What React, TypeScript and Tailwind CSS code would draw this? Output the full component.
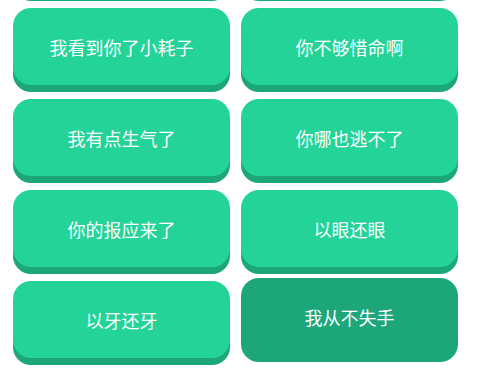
/**
 * SoundBoard
 * Grid of big green phrase buttons (scrolled list view)
 */

// =============================================================================
// Data
// =============================================================================

const PHRASES = [
  "准备好了吗",
  "我来了",
  "我看到你了小耗子",
  "你不够惜命啊",
  "我有点生气了",
  "你哪也逃不了",
  "你的报应来了",
  "以眼还眼",
  "以牙还牙",
  "我从不失手",
  "游戏结束",
  "再见了",
];

// index of the button currently under the pointer
const ACTIVE = 9;

// =============================================================================
// Component
// =============================================================================

export default function App() {
  return (
    <div
      className="w-[480px] h-[372px] overflow-hidden bg-white"
      style={{ fontFamily: '"Noto Sans CJK SC", "Noto Sans", sans-serif' }}
    >
      {/* List, scrolled down by one row */}
      <div className="-mt-[83px] pl-[13px] pr-[22px] grid grid-cols-2 gap-x-[11px] gap-y-[14px]">
        {PHRASES.map((text, index) => (
          <PhraseButton key={index} text={text} active={index === ACTIVE} />
        ))}
      </div>
    </div>
  );
}

// =============================================================================
// Phrase Button
// =============================================================================

interface PhraseButtonProps {
  text: string;
  active?: boolean;
}

function PhraseButton({ text, active = false }: PhraseButtonProps) {
  return (
    <button
      className={`
        h-[77px] rounded-[18px] flex items-center justify-center
        text-white text-[18px] leading-none
        shadow-[0_7px_0_#1ca67a]
        ${active ? "bg-[#1ca67a] -translate-y-[3px]" : "bg-[#23d398]"}
      `}
    >
      {text}
    </button>
  );
}
